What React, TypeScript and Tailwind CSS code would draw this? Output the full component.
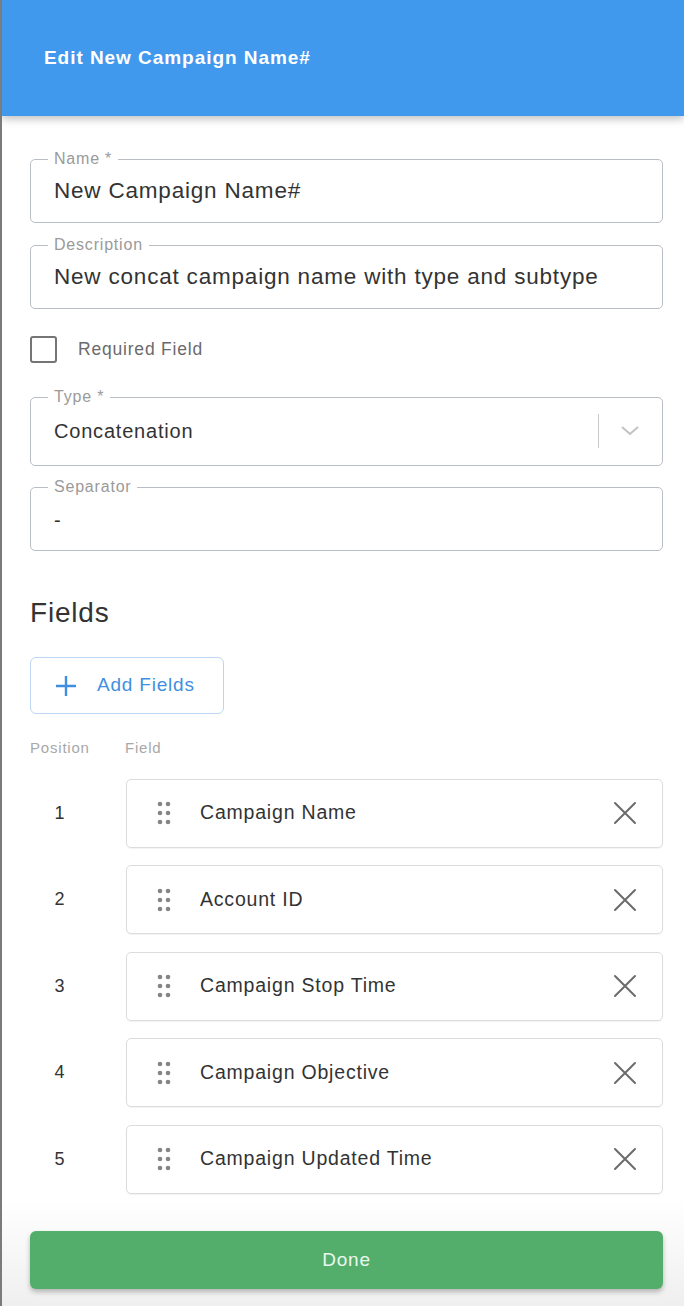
import React from "react";

const fields = [
  "Campaign Name",
  "Account ID",
  "Campaign Stop Time",
  "Campaign Objective",
  "Campaign Updated Time",
];

function Outlined({
  label,
  children,
  className = "",
}: {
  label: string;
  children: React.ReactNode;
  className?: string;
}) {
  return (
    <fieldset
      className={`border border-[#b9bec4] rounded-[5px] px-[23px] ${className}`}
    >
      <legend className="ml-[-6px] px-[6px] text-[16px] leading-4 tracking-[0.05em] text-[#9a9a9a]">
        {label}
      </legend>
      {children}
    </fieldset>
  );
}

function DragDots() {
  return (
    <svg width="16" height="26" viewBox="0 0 16 26" className="shrink-0">
      {[4, 13, 22].map((y) =>
        [4, 12].map((x) => (
          <circle key={`${x}-${y}`} cx={x} cy={y} r="2.3" fill="#858585" />
        ))
      )}
    </svg>
  );
}

function CloseIcon() {
  return (
    <svg width="24" height="24" viewBox="0 0 24 24" className="shrink-0">
      <path
        d="M2 2 L22 22 M22 2 L2 22"
        stroke="#6b6b6b"
        strokeWidth="2"
        strokeLinecap="round"
      />
    </svg>
  );
}

export default function App() {
  return (
    <div className="w-[684px] h-[1306px] bg-white border-l-2 border-[#7b7b7b] flex flex-col font-['Liberation_Sans',Arial,sans-serif] tracking-[0.05em] overflow-hidden">
      <header className="h-[116px] shrink-0 bg-[#4199ee] flex items-center pl-[42px] shadow-[0_3px_8px_rgba(0,0,0,0.25)] relative z-10">
        <h1 className="text-white font-bold text-[19px] tracking-[0.05em]">
          Edit New Campaign Name#
        </h1>
      </header>

      <main className="flex-1 flex flex-col pl-[28px] pr-[21px]">
        <Outlined label="Name *" className="mt-[35px] pt-[10px] pb-[17px]">
          <div className="text-[22.5px] leading-7 text-[#333]">
            New Campaign Name#
          </div>
        </Outlined>

        <Outlined label="Description" className="mt-[14px] pt-[10px] pb-[17px]">
          <div className="text-[22.5px] leading-7 text-[#333]">
            New concat campaign name with type and subtype
          </div>
        </Outlined>

        <label className="mt-[27px] flex items-center gap-[21px]">
          <span className="w-[27px] h-[27px] border-2 border-[#757575] rounded-[3px]" />
          <span className="text-[17.5px] text-[#6b6b6b]">Required Field</span>
        </label>

        <Outlined
          label="Type *"
          className="mt-[26px] pt-[9px] pb-[17px] pr-[22px]"
        >
          <div className="flex items-center">
            <div className="flex-1 text-[20px] leading-7 text-[#333]">
              Concatenation
            </div>
            <span className="w-px h-[34px] bg-[#c8c8c8] mr-[21px]" />
            <svg width="20" height="12" viewBox="0 0 20 12">
              <path
                d="M2 2 L10 9 L18 2"
                stroke="#c2c2c2"
                strokeWidth="2"
                fill="none"
              />
            </svg>
          </div>
        </Outlined>

        <Outlined label="Separator" className="mt-[13px] pt-[11px] pb-[16px]">
          <div className="text-[20px] leading-7 text-[#333]">-</div>
        </Outlined>

        <h2 className="mt-[46px] text-[28px] leading-8 text-[#333]">Fields</h2>

        <button className="mt-[28px] w-[194px] h-[57px] border border-[#bcd6f3] rounded-[6px] flex items-center pl-[24px] gap-[20px] text-[#3f8fe0]">
          <svg width="22" height="22" viewBox="0 0 22 22">
            <path
              d="M11 1 V21 M1 11 H21"
              stroke="#3f8fe0"
              strokeWidth="2.4"
            />
          </svg>
          <span className="text-[19px]">Add Fields</span>
        </button>

        <div className="mt-[23px] flex text-[15px] text-[#a8a8a8]">
          <span className="w-[95px]">Position</span>
          <span>Field</span>
        </div>

        <div className="mt-[19px] flex flex-col gap-[17.5px]">
          {fields.map((f, i) => (
            <div key={f} className="flex items-center">
              <span className="w-[60px] text-center text-[18px] text-[#333]">
                {i + 1}
              </span>
              <div className="ml-[36px] flex-1 h-[69px] border border-[#dcdcdc] rounded-[5px] flex items-center pl-[29px] pr-[25px] shadow-[0_1px_1px_rgba(0,0,0,0.05)]">
                <DragDots />
                <span className="ml-[28px] flex-1 text-[19.5px] text-[#333]">
                  {f}
                </span>
                <CloseIcon />
              </div>
            </div>
          ))}
        </div>
      </main>

      <footer className="h-[106px] shrink-0 bg-gradient-to-b from-white to-[#efefef] pt-[31px] pl-[28px] pr-[21px]">
        <button className="w-full h-[58px] bg-[#53ae6c] rounded-[6px] text-[#eaf8ee] text-[19px] shadow-[0_3px_5px_rgba(0,0,0,0.25)]">
          Done
        </button>
      </footer>
    </div>
  );
}
